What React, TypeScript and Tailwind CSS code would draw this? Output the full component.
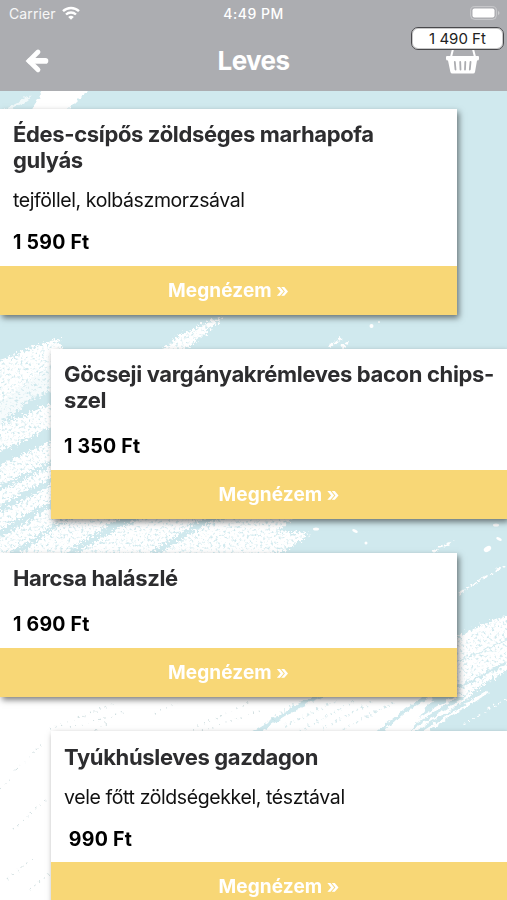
import { clsx } from "clsx";

interface Dish {
  name: string;
  description?: string;
  price: string;
}

const dishes: Dish[] = [
  { name: "Édes-csípős zöldséges marhapofa gulyás", description: "tejföllel, kolbászmorzsával", price: "1 590 Ft" },
  { name: "Göcseji vargányakrémleves bacon chips-szel", price: "1 350 Ft" },
  { name: "Harcsa halászlé", price: "1 690 Ft" },
  { name: "Tyúkhúsleves gazdagon", description: "vele főtt zöldségekkel, tésztával", price: "\u00a0990 Ft" },
];

const BrushBackground = () => (
  <svg className="absolute inset-0" width="507" height="900" viewBox="0 0 507 900" aria-hidden="true">
    <defs>
      <filter id="chalk" x="-30" y="0" width="570" height="930" filterUnits="userSpaceOnUse" colorInterpolationFilters="sRGB">
        <feTurbulence type="fractalNoise" baseFrequency="0.38" numOctaves="3" seed="8" result="noise" />
        <feDisplacementMap in="SourceGraphic" in2="noise" scale="13" xChannelSelector="R" yChannelSelector="G" result="edge" />
        <feColorMatrix in="noise" type="matrix" values="0 0 0 0 1  0 0 0 0 1  0 0 0 0 1  0 0 4 0 -0.9" result="grain" />
        <feComposite in="edge" in2="grain" operator="in" />
        <feGaussianBlur stdDeviation="0.5" />
      </filter>
      <filter id="rough" x="-30" y="0" width="570" height="930" filterUnits="userSpaceOnUse" colorInterpolationFilters="sRGB">
        <feTurbulence type="fractalNoise" baseFrequency="0.2" numOctaves="2" seed="3" result="noise" />
        <feDisplacementMap in="SourceGraphic" in2="noise" scale="6" xChannelSelector="R" yChannelSelector="G" />
        <feGaussianBlur stdDeviation="0.4" />
      </filter>
    </defs>
    <rect width="507" height="900" fill="#d0e9ee" />
    <g fill="#fff" filter="url(#rough)">
      <path d="M30 112 46 86H92L66 112Z" />
      <path d="M4 110 32 95 27 101 10 110Z" opacity=".7" />
      <path d="M-20 690H438L405 740 100 920H-20Z" />
    </g>
    <g fill="#fff" filter="url(#chalk)">
      <path d="M-20 368 10 357 30 348 58 339 65 355 0 401-20 410Z" />
      <path d="M-20 395 65 357V385L30 400 0 424-20 434Z" opacity=".8" />
      <path d="M-20 434 65 398V421L-20 460Z" />
      <path d="M-20 474 65 435V455L-20 494Z" />
      <path d="M-20 500 65 460V471L-20 515Z" />
      <path d="M-20 524 65 477V493L-20 540Z" />
      <path d="M-20 550 65 499V519L-20 570Z" />
      <path d="M4 564 78 513H128L48 564Z" />
      <path d="M60 564 118 528 155 513 210 514 132 564Z" />
      <path d="M142 564 212 521 250 513H296L279 531 310 534 288 549 250 564Z" />
      <path d="M158 353 180 335 224 315 208 332 182 353Z" />
      <path d="M450 642 480 626 520 610V662L450 706Z" />
    </g>
    <g stroke="#d0e9ee" fill="none" strokeWidth="4" filter="url(#rough)">
      <path d="M254 733 300 705 322 695M376 735 406 710 430 695" />
      <path d="M451 665 507 639" strokeWidth="1" />
      <path d="M451 691 507 663" strokeWidth="2" />
    </g>
    <path d="M438 697H507V732H412Z" fill="#d0e9ee" />
    {/* grey grain inside the solid white strokes */}
    <g stroke="#bfdde2" strokeWidth="2.500" strokeDasharray="1 4 2 3" fill="none" filter="url(#rough)" opacity=".6">
      <path d="M285 726 335 701M300 731 355 701M322 729 374 701M344 729 394 702M268 722 295 703" />
    </g>
    <g stroke="#fff" fill="none" strokeWidth="2" filter="url(#rough)">
      <path d="M410 733 472 695M419 735 488 692M403 730 455 697" strokeWidth="3" />
      <path d="M432 552 454 541M459 594 480 580 507 565" strokeDasharray="7 2 3 2" />
      <path d="M461 638 488 624" />
      <path d="M463 725 507 698" strokeDasharray="2 4" strokeWidth="1.500" />
      <path d="M329 347 343 336M341 347 349 342" strokeWidth="3" strokeDasharray="4 2" />
    </g>
    <g fill="#fff">
      <circle cx="371.500" cy="326" r="2" />
      <circle cx="379" cy="322" r="1" />
      <ellipse cx="487.500" cy="549" rx="4" ry="2.500" transform="rotate(-30 487.500 549)" />
      <ellipse cx="499" cy="539" rx="3" ry="1.500" transform="rotate(25 499 539)" />
      <ellipse cx="496" cy="525" rx="3" ry="1.500" />
      <ellipse cx="316" cy="529" rx="3" ry="1.500" />
      <ellipse cx="355" cy="531" rx="3" ry="1.500" transform="rotate(25 355 531)" />
      <circle cx="366" cy="543" r="1.500" />
    </g>
    {/* faint leftovers of paint near the bottom */}
    <g stroke="#cddcde" strokeWidth="1.500" strokeDasharray="1 5" fill="none" filter="url(#rough)">
      <path d="M50 729 113 704M70 728 125 712M193 729 250 702M202 731 260 711M155 714 177 702M90 733 108 723" />
      <path d="M0 788 10 780M13 829 48 798M8 878 35 858M30 890 51 872M15 770 45 742" />
    </g>
  </svg>
);

const StatusBar = () => (
  <div className="relative flex h-7 items-center justify-between pr-[7px] pl-[9px] text-[14px] tracking-[0.1px] text-white">
    <div className="flex items-center gap-[6px] pb-[2px]">
      <span className="text-white/90">Carrier</span>
      <svg width="18" height="14" viewBox="0 0 18 14" fill="none" stroke="currentColor" strokeWidth="2.400">
        <path d="M1 5.200a11.500 11.500 0 0 1 16 0M4 8.500a7.300 7.300 0 0 1 10 0" />
        <path d="M6.200 11a4 4 0 0 1 5.600 0L9 13.800Z" fill="currentColor" stroke="none" />
      </svg>
    </div>
    <span className="absolute inset-x-0 pb-px text-center text-[14px] font-medium tracking-[0.5px]">4:49 PM</span>
    <svg className="mb-[2px]" width="30" height="14" viewBox="0 0 30 14">
      <rect x=".6" y=".6" width="25.800" height="12.800" rx="4" fill="none" stroke="#fff" strokeOpacity=".35" />
      <rect x="2.500" y="2.500" width="22" height="9" rx="2" fill="#fff" />
      <path d="M28 5v4q1.500-.7 1.500-2T28 5Z" fill="#fff" fillOpacity=".4" />
    </svg>
  </div>
);

const Header = () => (
  <header className="relative h-[91px] bg-[#acadb1] text-white">
    <StatusBar />
    <div className="flex h-[63px] items-start justify-between pr-[27px] pl-[25px]">
      <button aria-label="Vissza" className="mt-[20px]">
        <svg width="25" height="26" viewBox="0 0 25 26" fill="none" stroke="currentColor" strokeLinecap="round">
          <path d="M13 4 4 12.900l9 8.900" strokeWidth="4.800" />
          <path d="M5 12.900h15.500" strokeWidth="5.600" />
        </svg>
      </button>
      <svg className="mt-[20px]" width="35" height="28" viewBox="0 0 35 28">
        <path d="m8 1-2 8M28 1l2 8" stroke="#fff" strokeWidth="2" fill="none" />
        <path d="M2 8h31q1 0 1 1v2q0 1.500-2 1.500L30 24q-.3 1.500-2 1.500H7.500Q5.700 25.500 5.400 24L3 12.500Q1 12.500 1 11V9q0-1 1-1Z" fill="#fff" />
        <path d="m9.800 14 .7 7.500M15.200 14l.3 7.500M20.300 14l-.3 7.500M25.500 14l-.7 7.500" stroke="#acadb1" strokeWidth="1.800" strokeLinecap="round" />
      </svg>
    </div>
    <h1 className="absolute inset-x-0 top-[45px] text-center text-[26px] leading-8 font-bold tracking-[-0.6px]">Leves</h1>
    <div className="absolute top-[27px] right-[3px] flex h-[23px] w-[93px] items-center justify-center rounded-[7px] border border-[#48484b] bg-white pt-px text-[15px] text-[#222] ring-1 ring-[#48484b]/30 ring-inset">
      1 490 Ft
    </div>
  </header>
);

const DishCard = ({ dish, right }: { dish: Dish; right: boolean }) => (
  <article
    className={clsx(
      "flex shrink-0 flex-col bg-white shadow-[2px_3px_6px_rgba(0,0,0,0.5)]",
      right ? "w-[456px] self-end" : "w-[457px] self-start"
    )}
  >
    <div className="px-[13px] pt-[12.200px] pb-[11.800px]">
      <h2 className="text-[22px] leading-[26px] font-[650] tracking-[-0.35px] text-[#2d2d2f]">{dish.name}</h2>
      {dish.description && (
        <p className="mt-[15px] text-[19.500px] leading-6 tracking-[-0.4px] text-[#111]">{dish.description}</p>
      )}
      <p
        className={clsx(
          "text-[19.500px] leading-6 font-bold tracking-[0.25px] text-black",
          dish.description ? "mt-[18px]" : "mt-[21px]"
        )}
      >
        {dish.price}
      </p>
    </div>
    <button className="h-[49px] bg-[#f8d776] pt-px text-[19px] font-bold tracking-[0.1px] text-white">Megnézem »</button>
  </article>
);

const App = () => (
  <div className="relative h-[900px] w-[507px] overflow-hidden font-['Inter','Liberation_Sans',sans-serif]">
    <BrushBackground />
    <Header />
    <main className="relative mt-[18px] flex flex-col gap-[34.150px]">
      {dishes.map((dish, i) => (
        <DishCard key={dish.name} dish={dish} right={i % 2 === 1} />
      ))}
    </main>
  </div>
);

export default App;
